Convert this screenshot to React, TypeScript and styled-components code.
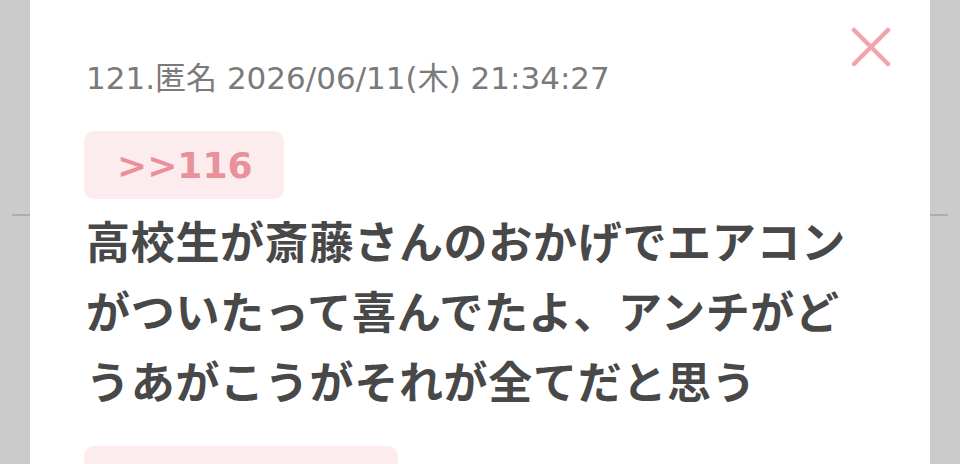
import React from 'react'
import styled, { createGlobalStyle } from 'styled-components'

const GlobalStyle = createGlobalStyle`
  html, body {
    margin: 0;
    padding: 0;
    background: #cbcbcb;
    overflow: hidden;
  }
  body {
    font-family: "Noto Sans CJK JP", "Noto Sans", sans-serif;
  }
`

const Page = styled.div`
  position: relative;
  width: 960px;
  height: 464px;
  background: #cbcbcb;
  overflow: hidden;
`

// the list divider of the page behind the modal
const BackDivider = styled.hr`
  margin: 214px 12px 0;
  border: 0;
  border-top: 2px solid #adadad;
`

const Modal = styled.div`
  position: absolute;
  top: 0;
  left: 30px;
  right: 30px;
  bottom: 0;
  background: #fff;
  padding: 58px 54px 0;
  box-sizing: border-box;
`

const CloseButton = styled.button`
  position: absolute;
  top: 26px;
  right: 38px;
  width: 42px;
  height: 42px;
  padding: 0;
  border: 0;
  background: transparent;
  display: flex;
  align-items: center;
  justify-content: center;
  cursor: pointer;
`

const Meta = styled.div`
  font-family: "DejaVu Sans", "Noto Sans CJK JP", sans-serif;
  font-size: 31px;
  line-height: 40px;
  color: #7a7a7a;
  padding-left: 2px;
`

const Anchor = styled.div`
  display: inline-flex;
  align-items: center;
  margin-top: 33px;
  height: 68px;
  padding: 0 32px 0 33px;
  border-radius: 10px;
  background: #fdeced;
  color: #e8919b;
  font-family: "DejaVu Sans", "Noto Sans CJK JP", sans-serif;
  font-size: 36px;
  font-weight: 700;
`

const Body = styled.p`
  margin: 6px 0 0;
  padding-left: 2px;
  font-size: 44px;
  line-height: 70px;
  letter-spacing: 0.7px;
  font-weight: 700;
  color: #484848;
`

const NextAnchor = styled.div<{ width: number }>`
  margin-top: 31px;
  width: ${({ width }) => width}px;
  height: 68px;
  border-radius: 10px;
  background: #fdeced;
`

export default function App() {
  return (
    <Page>
      <GlobalStyle />
      <BackDivider />
      <Modal>
        <CloseButton aria-label="閉じる">
          <svg width="40" height="40" viewBox="0 0 40 40">
            <path d="M3 3 L37 37 M37 3 L3 37" stroke="#f1a4ac" strokeWidth="4.5" strokeLinecap="round" />
          </svg>
        </CloseButton>
        <Meta>121.匿名 2026/06/11(木) 21:34:27</Meta>
        <Anchor>&gt;&gt;116</Anchor>
        <Body>
          高校生が斎藤さんのおかげでエアコン
          <br />
          がついたって喜んでたよ、アンチがど
          <br />
          うあがこうがそれが全てだと思う
        </Body>
        <NextAnchor width={314} />
      </Modal>
    </Page>
  )
}
